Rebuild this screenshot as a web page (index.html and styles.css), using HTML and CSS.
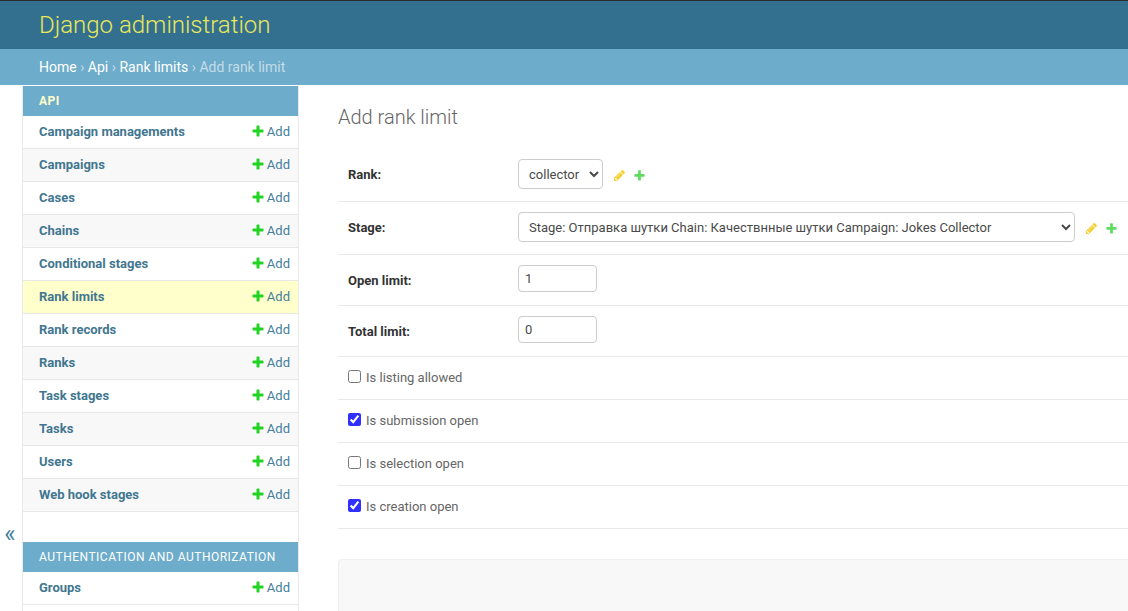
FILE: index.html
```html
<!DOCTYPE html>
<html lang="en">
<head>
    <meta charset="UTF-8">
    <title>Add rank limit | Django site admin</title>
    <link rel="stylesheet" href="styles.css">
</head>
<body>
    <svg class="defs" width="0" height="0">
        <symbol id="plus" viewBox="0 0 1792 1792"><path d="M1600 796v192q0 40-28 68t-68 28h-416v416q0 40-28 68t-68 28h-192q-40 0-68-28t-28-68v-416h-416q-40 0-68-28t-28-68v-192q0-40 28-68t68-28h416v-416q0-40 28-68t68-28h192q40 0 68 28t28 68v416h416q40 0 68 28t28 68z"/></symbol>
        <symbol id="pencil" viewBox="0 0 1792 1792"><path d="M491 1536l91-91-235-235-91 91v107h128v128h107zm523-928q0-22-22-22-10 0-17 7l-542 542q-7 7-7 17 0 22 22 22 10 0 17-7l542-542q7-7 7-17zm-54-192l416 416-832 832h-416v-416zm683 96q0 53-37 90l-166 166-416-416 166-165q36-38 90-38 53 0 91 38l235 234q37 39 37 91z"/></symbol>
    </svg>
    <header class="header">Django administration</header>
    <div class="breadcrumbs">
        <a href="#">Home</a> › <a href="#">Api</a> › <a href="#">Rank limits</a> › Add rank limit
    </div>
    <div class="main">
        <button class="toggle">«</button>
        <nav class="sidebar">
            <div class="caption caption-current">API</div>
            <div class="model"><a href="#">Campaign managements</a><span class="add"><svg class="icon-add"><use href="#plus"/></svg>Add</span></div>
            <div class="model alt"><a href="#">Campaigns</a><span class="add"><svg class="icon-add"><use href="#plus"/></svg>Add</span></div>
            <div class="model"><a href="#">Cases</a><span class="add"><svg class="icon-add"><use href="#plus"/></svg>Add</span></div>
            <div class="model alt"><a href="#">Chains</a><span class="add"><svg class="icon-add"><use href="#plus"/></svg>Add</span></div>
            <div class="model"><a href="#">Conditional stages</a><span class="add"><svg class="icon-add"><use href="#plus"/></svg>Add</span></div>
            <div class="model current"><a href="#">Rank limits</a><span class="add"><svg class="icon-add"><use href="#plus"/></svg>Add</span></div>
            <div class="model"><a href="#">Rank records</a><span class="add"><svg class="icon-add"><use href="#plus"/></svg>Add</span></div>
            <div class="model alt"><a href="#">Ranks</a><span class="add"><svg class="icon-add"><use href="#plus"/></svg>Add</span></div>
            <div class="model"><a href="#">Task stages</a><span class="add"><svg class="icon-add"><use href="#plus"/></svg>Add</span></div>
            <div class="model alt"><a href="#">Tasks</a><span class="add"><svg class="icon-add"><use href="#plus"/></svg>Add</span></div>
            <div class="model"><a href="#">Users</a><span class="add"><svg class="icon-add"><use href="#plus"/></svg>Add</span></div>
            <div class="model alt"><a href="#">Web hook stages</a><span class="add"><svg class="icon-add"><use href="#plus"/></svg>Add</span></div>
            <div class="caption caption-second">Authentication and Authorization</div>
            <div class="model"><a href="#">Groups</a><span class="add"><svg class="icon-add"><use href="#plus"/></svg>Add</span></div>
        </nav>
        <main class="content">
            <h1>Add rank limit</h1>
            <div class="row row-select">
                <label class="field-label">Rank:</label>
                <select class="select-rank"><option>collector</option></select>
                <svg class="icon-edit first"><use href="#pencil"/></svg>
                <svg class="icon-new"><use href="#plus"/></svg>
            </div>
            <div class="row row-select">
                <label class="field-label">Stage:</label>
                <select class="select-stage"><option>Stage: Отправка шутки Chain: Качествнные шутки Campaign: Jokes Collector</option></select>
                <svg class="icon-edit first"><use href="#pencil"/></svg>
                <svg class="icon-new"><use href="#plus"/></svg>
            </div>
            <div class="row row-input">
                <label class="field-label">Open limit:</label>
                <input class="num" type="number" value="1">
            </div>
            <div class="row row-input">
                <label class="field-label">Total limit:</label>
                <input class="num" type="number" value="0">
            </div>
            <div class="row row-check"><input type="checkbox"><label>Is listing allowed</label></div>
            <div class="row row-check"><input type="checkbox" checked><label>Is submission open</label></div>
            <div class="row row-check"><input type="checkbox"><label>Is selection open</label></div>
            <div class="row row-check"><input type="checkbox" checked><label>Is creation open</label></div>
            <div class="submit-row"></div>
        </main>
    </div>
</body>
</html>
```

FILE: styles.css
```css
html, body {
    height: 100%;
}
body {
    margin: 0;
    height: 611px;
    overflow: hidden;
    font-family: Roboto, "Liberation Sans", sans-serif;
    font-size: 14px;
    color: #333;
    background: #fff;
}
a {
    text-decoration: none;
}
.defs {
    position: absolute;
}
.header {
    height: 49px;
    box-sizing: border-box;
    border-top: 1px solid #2b2b2b;
    padding: 8px 39px 0;
    background: #336f8f;
    color: #e8e85c;
    font-size: 24px;
    font-weight: 300;
    line-height: 32px;
}
.breadcrumbs {
    height: 36px;
    box-sizing: border-box;
    padding: 0 39px;
    background: #6dacca;
    color: #c4dce8;
    line-height: 36px;
    font-size: 14px;
}
.breadcrumbs a {
    color: #fff;
}
.main {
    display: flex;
    height: 526px;
}
.toggle {
    width: 22px;
    flex: none;
    border: 0;
    background: #fff;
    padding: 371px 2px 0 0;
    align-self: stretch;
    text-align: center;
    font-family: Roboto, sans-serif;
    font-size: 24px;
    line-height: 24px;
    color: #447e9b;
    display: block;
}
.sidebar {
    width: 275px;
    flex: none;
    padding-top: 1px;
    border-left: 1px solid #eaeaea;
    border-right: 1px solid #eaeaea;
}
.caption {
    height: 30px;
    box-sizing: border-box;
    padding: 0 16px;
    background: #6dacca;
    line-height: 30px;
    font-size: 12px;
    color: #fff;
    letter-spacing: 0.5px;
}
.caption-current {
    color: #ffffcc;
    font-weight: 700;
}
.caption-second {
    margin-top: 30px;
    text-transform: uppercase;
}
.model {
    height: 33px;
    box-sizing: border-box;
    border-bottom: 1px solid #e8e8e8;
    padding: 0 8px 2px 16px;
    display: flex;
    justify-content: space-between;
    align-items: center;
    font-size: 13px;
}
.model a {
    color: #417690;
    font-weight: 700;
}
.alt {
    background: #f8f8f8;
}
.current {
    background: #ffffcc;
}
.add {
    display: flex;
    align-items: center;
    color: #447e9b;
}
.icon-add {
    width: 14px;
    height: 14px;
    margin-right: 2px;
    fill: #22d422;
}
.content {
    flex: 1;
    min-width: 0;
    padding: 0 0 0 39px;
}
h1 {
    margin: 0;
    padding: 20px 0 19px;
    font-size: 20px;
    font-weight: 300;
    line-height: 25px;
    color: #666;
}
.row {
    display: flex;
    align-items: center;
    box-sizing: border-box;
    border-bottom: 1px solid #e8e8e8;
    padding-left: 10px;
    font-size: 13px;
}
.row-select {
    height: 53px;
    padding-bottom: 2px;
}
.row-input {
    height: 51px;
}
.row-check {
    height: 43px;
    padding-bottom: 2px;
    color: #666;
}
.field-label {
    width: 170px;
    flex: none;
    font-weight: 700;
    color: #333;
}
select, .num {
    box-sizing: border-box;
    font-family: Roboto, sans-serif;
    font-size: 13px;
    color: #4a4a4a;
    background: #fff;
    border: 1px solid #ccc;
    border-radius: 4px;
}
select {
    height: 30px;
    padding: 0 6px;
}
.select-rank {
    width: 85px;
}
.select-stage {
    width: 557px;
}
.num {
    width: 79px;
    height: 27px;
    padding: 0 6px;
    margin-bottom: 4px;
}
.row-check input {
    margin: 0 5px 2px 0;
    width: 13px;
    height: 13px;
    accent-color: #2f2fff;
}
.icon-edit {
    width: 13px;
    height: 13px;
    fill: #f5d033;
    flex: none;
    margin-top: 2px;
}
.first {
    margin-left: 10px;
}
.icon-new {
    width: 13px;
    height: 13px;
    fill: #5fdc5f;
    margin: 2px 0 0 7px;
    flex: none;
}
.submit-row {
    margin: 30px -10px 0 0;
    height: 60px;
    background: #f8f8f8;
    border: 1px solid #eee;
    border-radius: 4px;
}
```
